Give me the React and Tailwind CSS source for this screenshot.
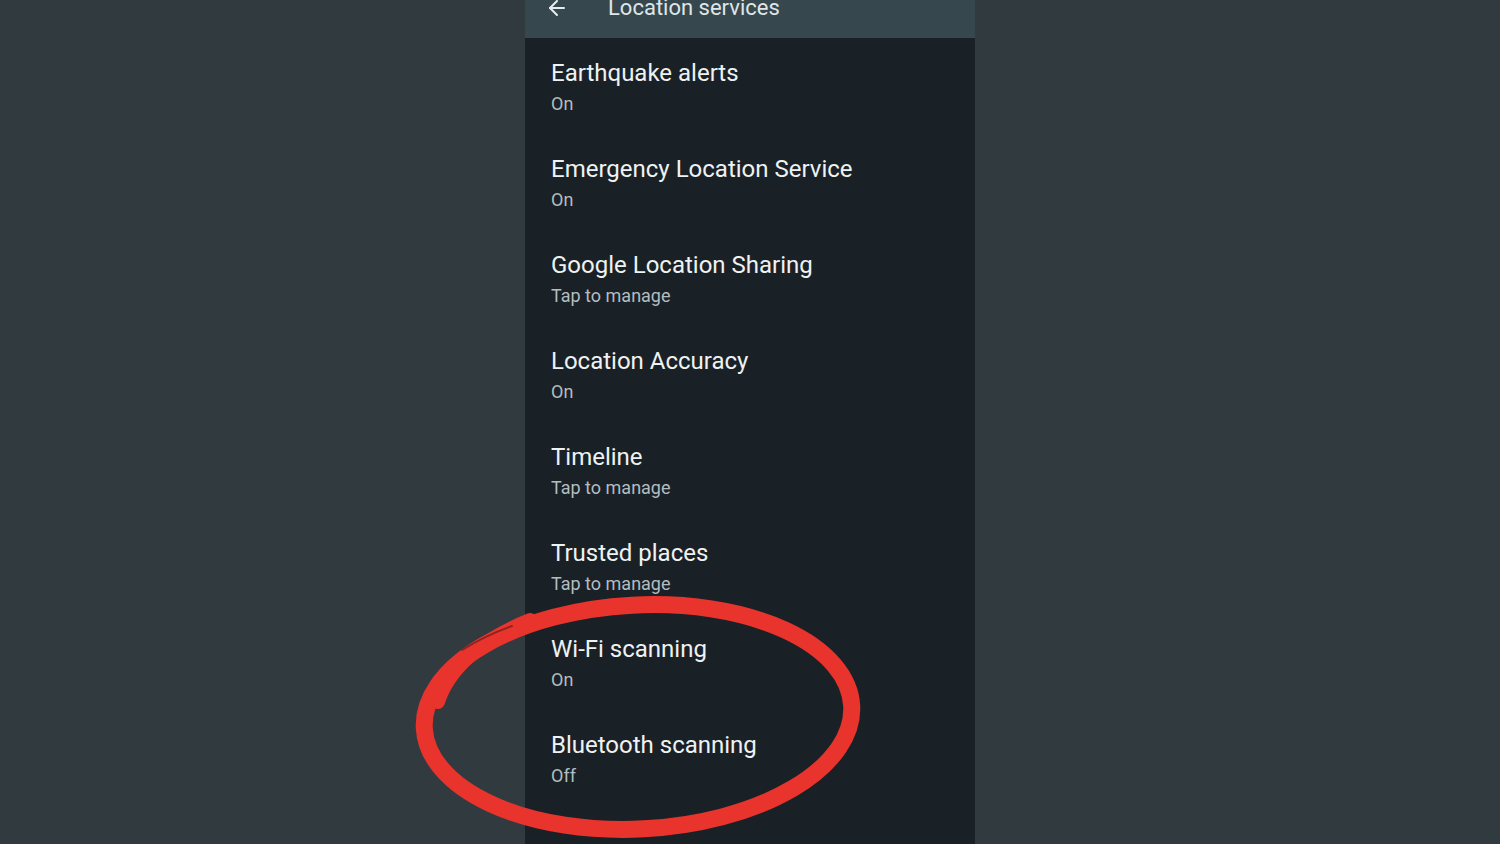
import { ArrowLeft } from "lucide-react"

const items = [
  { title: "Earthquake alerts", sub: "On" },
  { title: "Emergency Location Service", sub: "On" },
  { title: "Google Location Sharing", sub: "Tap to manage" },
  { title: "Location Accuracy", sub: "On" },
  { title: "Timeline", sub: "Tap to manage" },
  { title: "Trusted places", sub: "Tap to manage" },
  { title: "Wi-Fi scanning", sub: "On" },
  { title: "Bluetooth scanning", sub: "Off" },
]

export default function App() {
  return (
    <div
      className="relative h-[844px] w-[1500px] overflow-hidden bg-[#313a3f]"
      style={{ fontFamily: "Roboto, 'Open Sans', sans-serif" }}
    >
      <div className="mx-auto flex h-full w-[450px] flex-col bg-[#1a2126]">
        {/* Header */}
        <div className="h-[38px] shrink-0 overflow-hidden bg-[#37474e]">
          <div className="-mt-[5px] flex items-center pl-[20px]">
            <ArrowLeft className="h-[24px] w-[24px] text-[#e6ecee]" strokeWidth={2} />
            <span className="ml-[39px] text-[22px] leading-[26px] text-[#dfe6e8]">Location services</span>
          </div>
        </div>

        {/* List */}
        <div className="flex flex-col">
          {items.map(item => (
            <div key={item.title} className="h-[96px] pl-[26px] pt-[20px]">
              <div className="text-[24px] leading-[30px] text-[#eef2f3]">{item.title}</div>
              <div className="mt-[4px] text-[18px] leading-[24px] text-[#b3bcc0]">{item.sub}</div>
            </div>
          ))}
        </div>
      </div>

      {/* Red marker circle */}
      <svg className="pointer-events-none absolute left-0 top-0" width="1500" height="844" viewBox="0 0 1500 844">
        <ellipse
          cx="638"
          cy="717"
          rx="214"
          ry="112"
          transform="rotate(-3 638 717)"
          fill="none"
          stroke="#e8342c"
          strokeWidth="17"
        />
        <path
          d="M438 702 C 448 670, 480 640, 530 620"
          fill="none"
          stroke="#e8342c"
          strokeWidth="14"
          strokeLinecap="round"
        />
        <path
          d="M462 650 C 478 640, 495 632, 512 626"
          fill="none"
          stroke="#8a2520"
          strokeWidth="2"
          strokeLinecap="round"
        />
      </svg>
    </div>
  )
}
